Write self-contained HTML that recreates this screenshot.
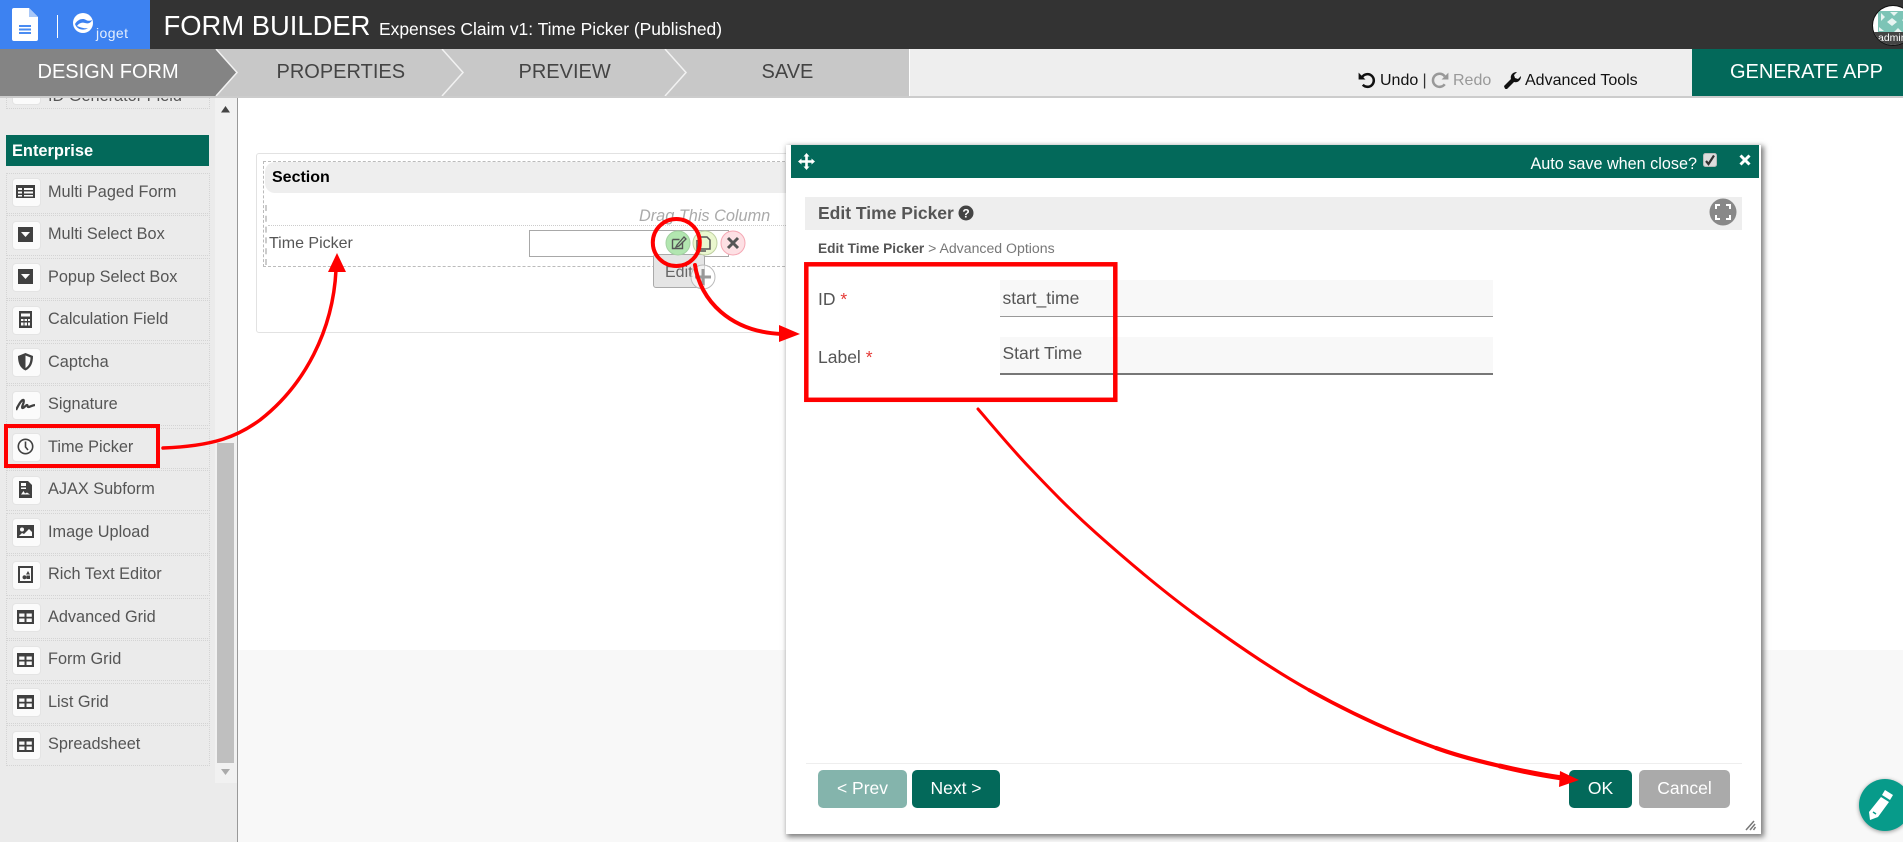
<!DOCTYPE html>
<html lang="en">
<head>
<meta charset="utf-8">
<title>Form Builder</title>
<style>
html,body{margin:0;padding:0;width:1903px;height:842px;overflow:hidden;background:#fff}
body{position:relative;font-family:"Liberation Sans",Arial,sans-serif;font-size:16px;color:#555}
.a{position:absolute;white-space:nowrap}
.t{position:absolute;white-space:nowrap;line-height:20px}
.item{position:absolute;left:6px;width:202px;height:39px;border:1px dotted #d4d4d4}
.ico{position:absolute;left:12px;width:27px;height:27px;background:#fbfbfb;border:1px solid #e4e4e4;border-radius:4px}
.ico svg{position:absolute;left:3px;top:3px;width:19px;height:19px;fill:#404040}
.lab{position:absolute;left:48px;margin-top:1px;white-space:nowrap;line-height:20px;color:#555;font-size:16.300px}
.btn{position:absolute;top:770px;height:38px;line-height:36px;border-radius:5px;color:#fff;text-align:center;font-size:17.500px}
</style>
</head>
<body>
<svg width="0" height="0" style="position:absolute">
<defs>
<symbol id="grid" viewBox="0 0 19 19"><path d="M1 3h17v14H1zM3.200 6.500v3.200h5.300V6.500zm7.300 0v3.200h5.300V6.500zM3.200 11.500v3.500h5.300v-3.500zm7.300 0v3.500h5.300v-3.500z" fill-rule="evenodd"/></symbol>
<symbol id="sel" viewBox="0 0 19 19"><path d="M2 2h15v15H2zM5 7l4.500 5L14 7z" fill-rule="evenodd"/></symbol>
</defs>
</svg>

<!-- top bar -->
<div class="a" style="left:0;top:0;width:1903px;height:49px;background:#333"></div>
<div class="a" style="left:0;top:0;width:150px;height:49px;background:#3d82f1"></div>
<svg class="a" style="left:0;top:0" width="150" height="49">
<path d="M12 10q0-2 2-2h15l9 9v22q0 2-2 2H14q-2 0-2-2z" fill="#fff"/>
<path d="M29 8l9 9h-9z" fill="#a9c8f8"/>
<path d="M19 26h12M19 29.500h12M19 33h12" stroke="#4a8cf2" stroke-width="2"/>
<path d="M57.500 15v23" stroke="#fff"/>
<circle cx="83" cy="23" r="10" fill="#fff"/>
<path d="M75 24c3-5 8-6 11-4 2 1 4 1 6 0-1 3-4 4-7 3-3-1-6 0-8 3 3 1 7 3 11 2-4 3-11 2-13-4z" fill="#3d82f1"/>
</svg>
<div class="t" style="left:96px;top:23px;font-size:14px;color:#e4eefd;letter-spacing:.4px">joget</div>
<div class="t" style="left:163.500px;top:10px;font-size:27.400px;line-height:32px;color:#fff">FORM BUILDER</div>
<div class="t" style="left:379px;top:18px;font-size:17.450px;line-height:22px;color:#fff">Expenses Claim v1: Time Picker (Published)</div>
<!-- avatar -->
<div class="a" style="left:1872px;top:5px;width:42px;height:41px;border-radius:50%;background:#fff;border:1px solid #111;overflow:hidden;box-sizing:border-box">
 <svg class="a" style="left:5px;top:5px" width="36" height="22"><rect width="36" height="22" fill="#7cc4b6"/><path d="M3 2l4 4-4 4zM12 1l4 4 4-4zM9 11l5-4 5 4-5 4zM1 16l5 4H1zM20 17l4 4h-8zM24 9l4-3v8z" fill="#e8f5f2"/></svg>
 <div class="a" style="left:0;top:26px;width:42px;height:14px;background:#444;color:#fff;font-size:10.500px;line-height:13px;text-indent:5px">admin</div>
</div>

<!-- step bar -->
<div class="a" style="left:0;top:49px;width:1903px;height:47px;background:#eee"></div>
<div class="a" style="left:0;top:96px;width:1903px;height:2px;background:#ccc"></div>
<svg class="a" style="left:0;top:49px" width="912" height="47">
<rect width="909" height="47" fill="#c8c8c8"/>
<path d="M0 0h216l21 23.500L216 47H0z" fill="#848484"/>
<path d="M216 0l21 23.500L216 47M442 0l21 23.500L442 47M665 0l21 23.500L665 47" fill="none" stroke="#f2f2f2" stroke-width="1.500"/>
<path d="M909.500 0v47" stroke="#fff" stroke-width="1"/>
</svg>
<div class="t" style="left:37.500px;top:62px;font-size:20px;color:#fff">DESIGN FORM</div>
<div class="t" style="left:276.500px;top:62px;font-size:20px;color:#444">PROPERTIES</div>
<div class="t" style="left:518.500px;top:62px;font-size:20px;color:#444">PREVIEW</div>
<div class="t" style="left:761.500px;top:62px;font-size:20px;color:#444">SAVE</div>
<div class="a" style="left:1692px;top:49px;width:211px;height:47px;background:#03695a"></div>
<div class="t" style="left:1730px;top:62px;font-size:20px;color:#fff">GENERATE APP</div>
<svg class="a" style="left:1357px;top:70px" width="19" height="19" viewBox="0 0 18 18"><path d="M5 6.500A6 6 0 1 1 5.500 14" fill="none" stroke="#111" stroke-width="2.400"/><path d="M1.500 2.500v6.500H8z" fill="#111"/></svg>
<div class="t" style="left:1380px;top:71px;color:#111">Undo</div>
<div class="t" style="left:1422.500px;top:71px;color:#333">|</div>
<svg class="a" style="left:1431px;top:70px" width="19" height="19" viewBox="0 0 18 18"><path d="M13 6A6.200 6.200 0 1 0 13 13.500" fill="none" stroke="#999" stroke-width="2.400"/><path d="M16.500 2.500v6.500H10z" fill="#999"/></svg>
<div class="t" style="left:1453px;top:71px;color:#999">Redo</div>
<svg class="a" style="left:1503px;top:71px" width="18" height="18" viewBox="0 0 18 18"><path d="M1 15l7-7c-1-3 1-7 6-7l-3 3 1 3 3 1 3-3c0 5-4 7-7 6l-7 7q-2 1-3-3z" fill="#111"/></svg>
<div class="t" style="left:1525px;top:71px;color:#111">Advanced Tools</div>

<!-- canvas backgrounds -->
<div class="a" style="left:238px;top:650px;width:1665px;height:192px;background:#f8f8f8"></div>

<!-- sidebar -->
<div class="a" style="left:0;top:98px;width:237px;height:744px;background:#ebebeb;overflow:hidden">
 <div class="item" style="top:-30px"></div>
 <div class="ico" style="top:-22px"><svg viewBox="0 0 19 19"><path d="M2 2h15v15H2z"/></svg></div>
 <div class="lab" style="top:-13px">ID Generator Field</div>
</div>
<div class="a" style="left:237px;top:98px;width:1px;height:744px;background:#999"></div>
<div class="a" style="left:215px;top:98px;width:22px;height:685px;background:#f1f1f1"></div>
<div class="a" style="left:217px;top:443px;width:17px;height:320px;background:#bfbfbf"></div>
<svg class="a" style="left:215px;top:98px" width="22" height="685"><path d="M6 14.500h9L10.500 8z" fill="#444"/><path d="M6 671h9l-4.500 6z" fill="#aaa"/></svg>

<div class="a" style="left:6px;top:135px;width:203px;height:31px;background:#03695a"></div>
<div class="t" style="left:12px;top:141px;font-weight:bold;color:#fff;font-size:16.400px">Enterprise</div>

<div class="item" style="top:173px"></div>
<div class="ico" style="top:178px"><svg viewBox="0 0 19 19"><path d="M0 3h19v13H0zM2 6v2h4V6zm6 0v2h9V6zM2 9.500v2h4v-2zm6 0v2h9v-2zM2 13v1.500h4V13zm6 0v1.500h9V13z" fill-rule="evenodd"/></svg></div>
<div class="lab" style="top:181px">Multi Paged Form</div>

<div class="item" style="top:215px"></div>
<div class="ico" style="top:221px"><svg viewBox="0 0 19 19"><use href="#sel"/></svg></div>
<div class="lab" style="top:223px">Multi Select Box</div>

<div class="item" style="top:258px"></div>
<div class="ico" style="top:263px"><svg viewBox="0 0 19 19"><use href="#sel"/></svg></div>
<div class="lab" style="top:266px">Popup Select Box</div>

<div class="item" style="top:300px"></div>
<div class="ico" style="top:306px"><svg viewBox="0 0 19 19"><path d="M3 1h13v17H3zM5 3.500v3h9v-3zM5 9v2h2.500V9zm3.500 0v2H11V9zm3.500 0v2h2V9zM5 12.500v3h2.500v-3zm3.500 0v3H11v-3zm3.500 0v3h2v-3z" fill-rule="evenodd"/></svg></div>
<div class="lab" style="top:308px">Calculation Field</div>

<div class="item" style="top:343px"></div>
<div class="ico" style="top:348px"><svg viewBox="0 0 19 19"><path d="M9.500 1L17 4c0 7-2 12-7.500 14.500C4 16 2 11 2 4zM9.500 3.500V16c3.500-2 5-6 5-10.500z" fill-rule="evenodd"/></svg></div>
<div class="lab" style="top:351px">Captcha</div>

<div class="item" style="top:385px"></div>
<div class="ico" style="top:391px"><svg viewBox="0 0 19 19"><path d="M0 15C3 9 6 4 7.500 5 9 7 5 12 6.500 13c1.500.5 3-3 4.500-3 1 0 0 2 1.500 2 1.500 0 3-1.500 6.500-2" fill="none" stroke="#404040" stroke-width="2.300"/></svg></div>
<div class="lab" style="top:393px">Signature</div>

<div class="item" style="top:428px"></div>
<div class="ico" style="top:433px"><svg viewBox="0 0 19 19"><circle cx="9.500" cy="9.500" r="7.200" fill="none" stroke="#404040" stroke-width="1.600"/><path d="M9.500 4.500v5.500l2.500 3" fill="none" stroke="#404040" stroke-width="1.600"/></svg></div>
<div class="lab" style="top:436px">Time Picker</div>

<div class="item" style="top:470px"></div>
<div class="ico" style="top:476px"><svg viewBox="0 0 19 19"><path d="M3 1h9l4 4v13H3zM5 3v3h5V3zM5 7.500v1.500h5V7.500zM5 14.500h9l-3-2-2 1-1.500-2.500z" fill-rule="evenodd"/></svg></div>
<div class="lab" style="top:478px">AJAX Subform</div>

<div class="item" style="top:513px"></div>
<div class="ico" style="top:518px"><svg viewBox="0 0 19 19"><path d="M1 3h17v13H1zM6 5.500a2 2 0 1 0 0 4 2 2 0 0 0 0-4zM3 14h13v-4l-3-3-5 5-2-1z" fill-rule="evenodd"/></svg></div>
<div class="lab" style="top:521px">Image Upload</div>

<div class="item" style="top:555px"></div>
<div class="ico" style="top:561px"><svg viewBox="0 0 19 19"><path d="M2 1h15v17H2zM4 3v13h11V3zM12 6l2 3.500h-4zM10.500 10.500H14V14h-3.500zM7.500 10.500a2 2 0 1 1 0 3.500 2 2 0 0 1 0-3.500z" fill-rule="evenodd"/></svg></div>
<div class="lab" style="top:563px">Rich Text Editor</div>

<div class="item" style="top:598px"></div>
<div class="ico" style="top:603px"><svg viewBox="0 0 19 19"><use href="#grid"/></svg></div>
<div class="lab" style="top:606px">Advanced Grid</div>

<div class="item" style="top:640px"></div>
<div class="ico" style="top:646px"><svg viewBox="0 0 19 19"><use href="#grid"/></svg></div>
<div class="lab" style="top:648px">Form Grid</div>

<div class="item" style="top:683px"></div>
<div class="ico" style="top:688px"><svg viewBox="0 0 19 19"><use href="#grid"/></svg></div>
<div class="lab" style="top:691px">List Grid</div>

<div class="item" style="top:725px"></div>
<div class="ico" style="top:731px"><svg viewBox="0 0 19 19"><use href="#grid"/></svg></div>
<div class="lab" style="top:733px">Spreadsheet</div>

<!-- form canvas -->
<div class="a" style="left:256px;top:153px;width:540px;height:178px;border:1px solid #e2e2e2;border-radius:3px;box-sizing:content-box"></div>
<div class="a" style="left:263px;top:161px;width:530px;height:104px;border:1px dashed #bbb"></div>
<div class="a" style="left:265px;top:162px;width:528px;height:31px;background:#eee;border-radius:10px 0 0 10px"></div>
<div class="t" style="left:272px;top:168px;font-weight:bold;color:#000">Section</div>
<div class="a" style="left:265px;top:205px;width:1px;height:60px;border-left:2px dashed #ccc"></div>
<div class="a" style="left:268px;top:225px;width:520px;height:0;border-top:1px dotted #ccc"></div>
<div class="t" style="left:639px;top:206px;font-style:italic;color:#aaa;font-size:16.300px">Drag This Column</div>
<div class="t" style="left:269px;top:234px;color:#555">Time Picker</div>
<div class="a" style="left:529px;top:230px;width:198px;height:25px;border:1.500px solid #a8a8a8;background:#fff"></div>
<div class="a" style="left:653px;top:254px;width:50px;height:32px;background:#e5e5e5;border:1px solid #aaa;border-radius:3px"></div>
<div class="t" style="left:665px;top:263px;color:#666">Edit</div>
<svg class="a" style="left:660px;top:225px" width="100" height="70">
<circle cx="18" cy="18" r="12" fill="#b2e6b0" stroke="#a3d2a2"/>
<path d="M12.500 14.500h7M12.500 14.500v9h10v-7" fill="none" stroke="#555" stroke-width="1.400"/><path d="M17 20l7-8 2 2-7 7-3 1z" fill="none" stroke="#555" stroke-width="1.300"/>
<circle cx="45" cy="18" r="12" fill="#eaf7cf" stroke="#bfd0a2"/>
<path d="M40 12h7l3 3v9h-10zM37 15v11h9" fill="none" stroke="#555" stroke-width="1.500"/>
<circle cx="73" cy="18" r="12" fill="#fde0e4" stroke="#f5a8b4"/>
<path d="M68 13l10 10M78 13l-10 10" stroke="#555" stroke-width="3"/>
<circle cx="43" cy="52" r="12" fill="rgba(255,255,255,.5)" stroke="#bbb"/>
<path d="M43 44v16M35 52h16" stroke="#999" stroke-width="3"/>
</svg>

<!-- dialog -->
<div class="a" style="left:786px;top:145px;width:975px;height:689px;background:#fff;box-shadow:2px 2px 5px 1px rgba(60,60,60,.65)"></div>
<div class="a" style="left:791px;top:145px;width:968px;height:33px;background:#03695a"></div>
<svg class="a" style="left:798px;top:153px" width="17" height="17" viewBox="0 0 17 17"><path d="M8.500 0l3 3.500H9.800v3.700h3.700V5.500L17 8.500l-3.500 3V9.800H9.800v3.700h1.700l-3 3.500-3-3.500h1.700V9.800H3.500v1.700L0 8.500l3.500-3v1.700h3.700V3.500H5.500z" fill="#fff"/></svg>
<div class="t" style="left:1530.500px;top:154px;color:#fff;font-size:16.200px">Auto save when close?</div>
<svg class="a" style="left:1703px;top:153px" width="14" height="14"><rect x=".5" y=".5" width="13" height="13" rx="2" fill="#ddd" stroke="#bbb"/><path d="M3 8l2.500 3L11 2.500" fill="none" stroke="#333" stroke-width="2.200"/></svg>
<svg class="a" style="left:1739px;top:154px" width="12" height="12"><path d="M1.500 1.500l9 9M10.500 1.500l-9 9" stroke="#fff" stroke-width="3"/></svg>

<div class="a" style="left:805px;top:197px;width:937px;height:33px;background:#eee"></div>
<div class="t" style="left:818px;top:203px;font-weight:bold;color:#555;font-size:17.500px">Edit Time Picker</div>
<svg class="a" style="left:958px;top:205px" width="16" height="16"><circle cx="8" cy="8" r="7.500" fill="#444"/><text x="8" y="12.500" font-family="Liberation Sans" font-weight="bold" font-size="12" fill="#fff" text-anchor="middle">?</text></svg>
<svg class="a" style="left:1709px;top:198px" width="28" height="28"><circle cx="14" cy="14" r="13.500" fill="#888"/><path d="M7 11V7h4M17 7h4v4M21 17v4h-4M11 21H7v-4" fill="none" stroke="#fff" stroke-width="2"/></svg>
<div class="t" style="left:818px;top:238px;font-size:13.700px"><b style="color:#555">Edit Time Picker</b> <span style="color:#777;font-size:14.100px">&gt; Advanced Options</span></div>

<div class="t" style="left:818px;top:289px;color:#555;font-size:17.500px">ID <span style="color:#e53935">*</span></div>
<div class="a" style="left:1000px;top:280px;width:493px;height:36px;background:#f8f8f8;border-bottom:1.500px solid #999"></div>
<div class="t" style="left:1002.500px;top:287.500px;color:#555;font-size:17.500px">start_time</div>
<div class="t" style="left:818px;top:347px;color:#555;font-size:17.500px">Label <span style="color:#e53935">*</span></div>
<div class="a" style="left:1000px;top:337px;width:493px;height:36px;background:#f8f8f8;border-bottom:2.500px solid #777"></div>
<div class="t" style="left:1002.500px;top:343px;color:#555;font-size:17.500px">Start Time</div>

<div class="a" style="left:806px;top:763px;width:936px;height:1px;background:#eee"></div>
<div class="btn" style="left:818px;width:89px;background:#84b4ac">&lt; Prev</div>
<div class="btn" style="left:912px;width:88px;background:#03695a">Next &gt;</div>
<div class="btn" style="left:1569px;width:63px;background:#03695a">OK</div>
<div class="btn" style="left:1639px;width:91px;background:#aaa">Cancel</div>
<svg class="a" style="left:1745px;top:819px" width="12" height="12"><path d="M1 11l8-9M5 11l5-6M8.500 11l2-3" stroke="#777" stroke-width="1.500"/></svg>

<!-- FAB -->
<div class="a" style="left:1859px;top:779px;width:52px;height:52px;border-radius:50%;background:#079b8a;box-shadow:0 1px 4px rgba(0,0,0,.4)"></div>
<svg class="a" style="left:1866px;top:788px" width="30" height="34" viewBox="0 0 30 34"><path d="M19 2l8 5-3 5-8-5zM15 9l8 5-11 15-8 3-1-8z" fill="#fff"/><path d="M7 24l3 2" stroke="#079b8a" stroke-width="1.500"/></svg>

<!-- red annotations -->
<svg class="a" style="left:0;top:0;pointer-events:none" width="1903" height="842" fill="none" stroke="#f00" stroke-linecap="round">
<rect x="6" y="426" width="152" height="40" stroke-width="4" stroke-linecap="butt"/>
<rect x="806.300" y="264.300" width="309" height="135.500" stroke-width="4.500" stroke-linecap="butt"/>
<circle cx="676.300" cy="242.500" r="23.500" stroke-width="4"/>
<path d="M163 448C215 446 238 436 260 420C305 385 333 330 336 270" stroke-width="3.500"/>
<path d="M337 253l9 19h-18z" fill="#f00" stroke="none"/>
<path d="M695 265C700 300 730 332 782 334" stroke-width="4"/>
<path d="M800 334l-21-9v17z" fill="#f00" stroke="none"/>
<path d="M978 409C986.500 418.700 1009.300 446.300 1029 467C1048.700 487.700 1068.700 508.700 1096 533C1123.300 557.300 1157.500 586.800 1193 613" stroke-width="3"/>
<path d="M1193 613C1228.500 639.200 1268.500 667.500 1309 690" stroke-width="3.200"/>
<path d="M1309 690C1349.500 712.500 1394.200 733.300 1436 748" stroke-width="3.600"/>
<path d="M1436 748C1457 755.500 1478 761 1500 766" stroke-width="4.200"/>
<path d="M1500 766C1521 771 1541 775 1562 778" stroke-width="5"/>
<path d="M1579 780l-19-9-1 16z" fill="#f00" stroke="none"/>
</svg>
</body>
</html>
